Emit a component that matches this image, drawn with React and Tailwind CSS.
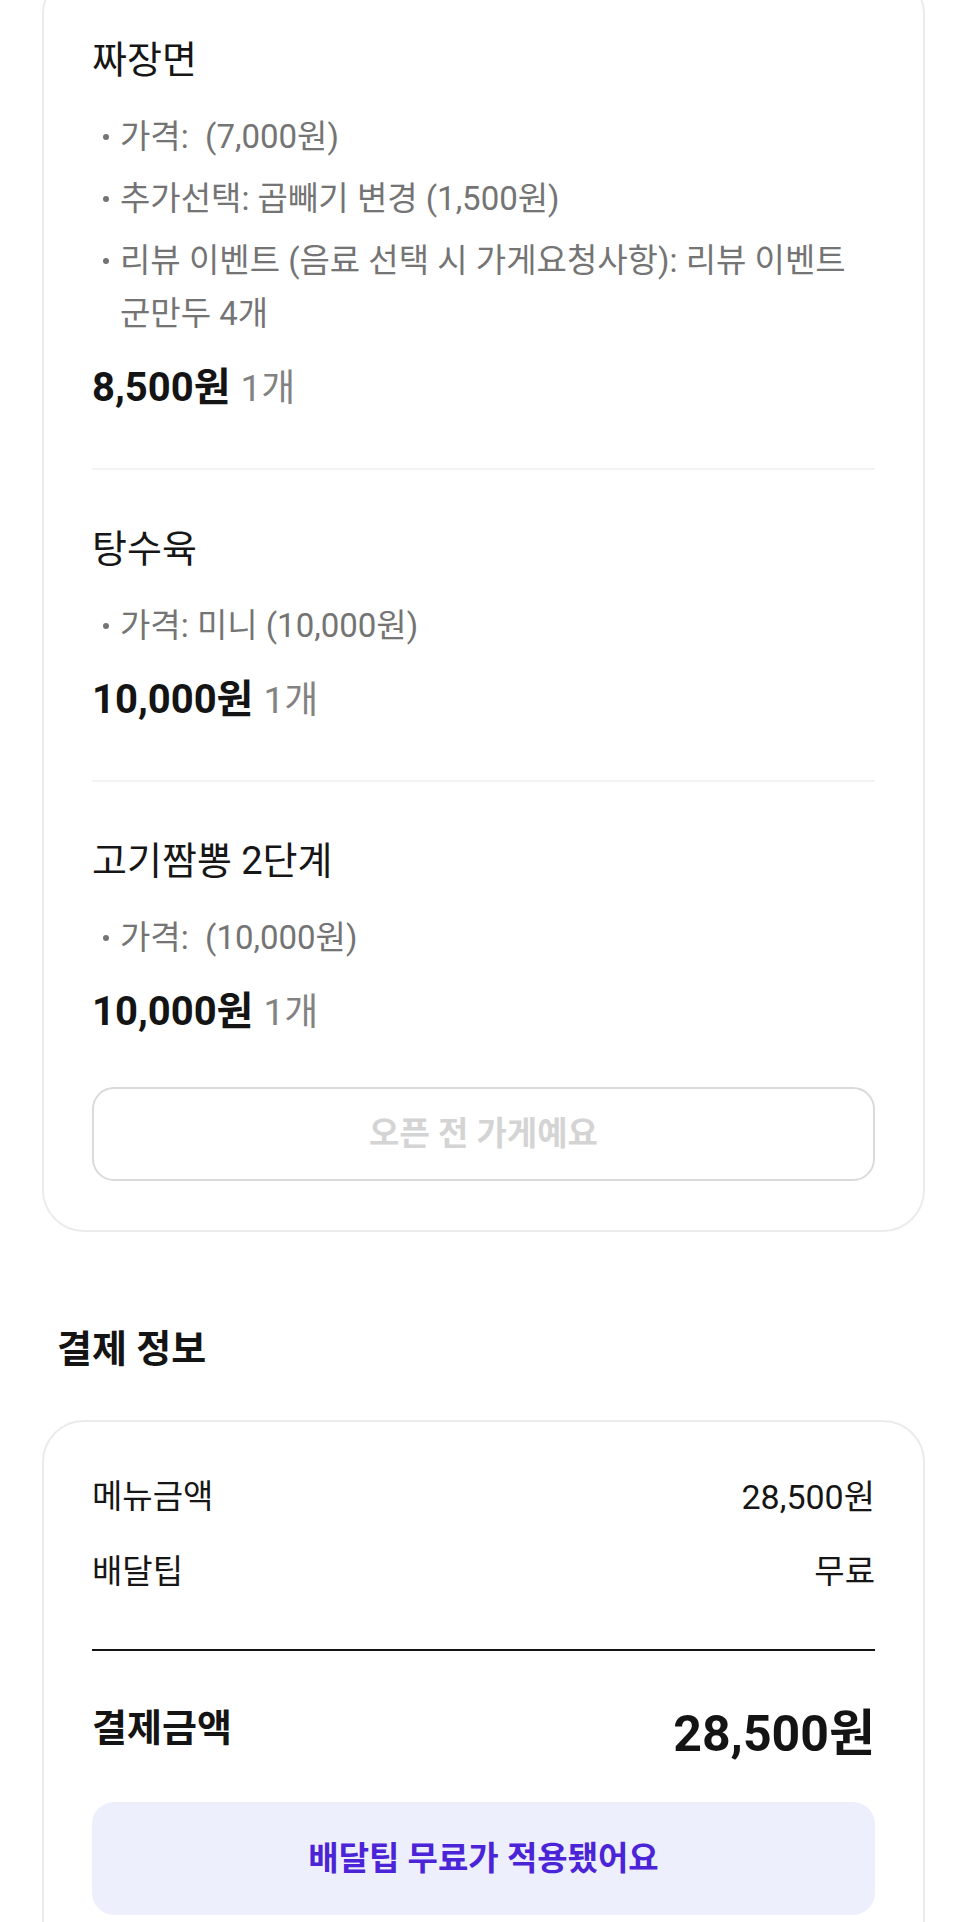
const ITEMS = [
  {
    name: '짜장면',
    options: [
      '가격:  (7,000원)',
      '추가선택: 곱빼기 변경 (1,500원)',
      '리뷰 이벤트 (음료 선택 시 가게요청사항): 리뷰 이벤트 군만두 4개',
    ],
    price: '8,500원',
    qty: '1개',
  },
  {
    name: '탕수육',
    options: ['가격: 미니 (10,000원)'],
    price: '10,000원',
    qty: '1개',
  },
  {
    name: '고기짬뽕 2단계',
    options: ['가격:  (10,000원)'],
    price: '10,000원',
    qty: '1개',
  },
];

function MenuItem({ item, first, last }) {
  return (
    <div className={`${first ? 'pt-[62px]' : 'pt-[55px]'} ${last ? '' : 'pb-[55px] border-b-2 border-[#f3f3f3]'}`}>
      <div className="text-[38px] leading-[48px] text-[#161616]">{item.name}</div>
      <ul className="mt-[26px] flex flex-col gap-[9px]">
        {item.options.map((o) => (
          <li key={o} className="flex text-[33px] leading-[53px] text-[#747474]">
            <span className="w-[28px] shrink-0 flex justify-center pt-[24px]">
              <span className="w-[6px] h-[6px] rounded-full bg-[#747474]" />
            </span>
            <span className="whitespace-pre-wrap break-keep">{o}</span>
          </li>
        ))}
      </ul>
      <div className="mt-[24px] leading-[48px] flex items-baseline gap-[10px]">
        <span className="text-[40px] font-bold text-[#141414]">{item.price}</span>
        <span className="text-[37px] text-[#828282]">{item.qty}</span>
      </div>
    </div>
  );
}

export default function App() {
  return (
    <div className="h-[1922px] overflow-hidden bg-white font-['Roboto','Noto_Sans_CJK_KR',sans-serif]">
      <div className="-mt-[28px] ml-[42px] mr-[41px] border-2 border-[#ebebeb] rounded-[42px] px-[48px] pb-[49px]">
        {ITEMS.map((item, i) => (
          <MenuItem key={item.name} item={item} first={i === 0} last={i === ITEMS.length - 1} />
        ))}
        <button
          disabled
          className="mt-[50px] w-full h-[94px] border-2 border-[#dadada] rounded-[22px] text-[33px] font-bold text-[#d4d4d4]"
        >
          오픈 전 가게예요
        </button>
      </div>

      <h2 className="mt-[93px] ml-[57px] text-[38px] leading-[48px] font-bold text-[#141414]">결제 정보</h2>

      <div className="mt-[47px] ml-[42px] mr-[41px] border-2 border-[#ebebeb] rounded-[42px] px-[48px] pt-[53px] pb-[60px]">
        <div className="flex justify-between text-[33px] leading-[44px] text-[#161616]">
          <span>메뉴금액</span>
          <span className="text-[34px]">28,500원</span>
        </div>
        <div className="mt-[31px] flex justify-between text-[33px] leading-[44px] text-[#161616]">
          <span>배달팁</span>
          <span>무료</span>
        </div>
        <div className="mt-[55px] h-[2px] bg-[#141414]" />
        <div className="mt-[53px] flex justify-between items-start">
          <span className="text-[38px] leading-[48px] font-bold text-[#141414]">결제금액</span>
          <span className="text-[50px] leading-[60px] font-bold text-[#141414]">28,500원</span>
        </div>
        <div className="mt-[38px] h-[113px] rounded-[22px] bg-[#eeeffd] flex items-center justify-center text-[33px] font-bold text-[#4a24d6]">
          배달팁 무료가 적용됐어요
        </div>
      </div>
    </div>
  );
}
